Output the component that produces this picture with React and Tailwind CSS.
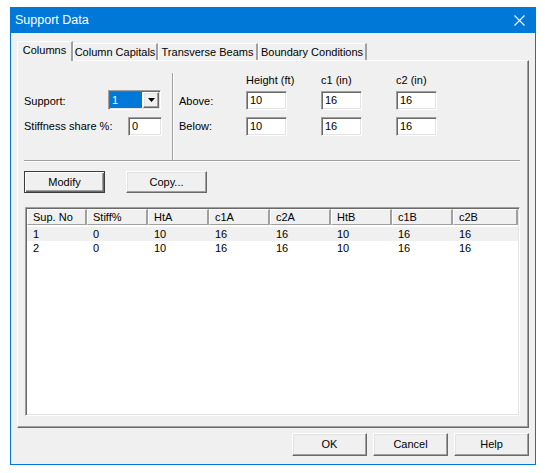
import React from "react";

const sunken =
  "bg-white border border-t-[#a0a0a0] border-l-[#a0a0a0] border-r-white border-b-white shadow-[inset_1px_1px_0_#696969,inset_-1px_-1px_0_#e3e3e3]";
const raised =
  "bg-[#f0f0f0] border border-t-white border-l-white border-r-[#696969] border-b-[#696969] shadow-[inset_-1px_-1px_0_#a0a0a0,inset_1px_1px_0_#e3e3e3]";

function Input({ value, w = "w-[41px]", h = "h-[19px]" }) {
  return (
    <div className={`${sunken} ${w} ${h} flex items-center pl-[3px] leading-none`}>
      {value}
    </div>
  );
}

function Btn({ children, w = "w-[75px]", h = "h-[23px]", def = false }) {
  return def ? (
    <div className={`${w} ${h} border border-[#3c3c3c] bg-[#f0f0f0] shadow-[inset_1px_1px_0_#fff,inset_-1px_-1px_0_#696969,inset_-2px_-2px_0_#a0a0a0] flex items-center justify-center`}>
      {children}
    </div>
  ) : (
    <div className={`${w} ${h} ${raised} flex items-center justify-center`}>{children}</div>
  );
}

const headers = ["Sup. No", "Stiff%", "HtA", "c1A", "c2A", "HtB", "c1B", "c2B"];
const widths = ["w-[60px]", "w-[61px]", "w-[61px]", "w-[61px]", "w-[61px]", "w-[61px]", "w-[61px]", "w-[65px]"];
const rows = [
  ["1", "0", "10", "16", "16", "10", "16", "16"],
  ["2", "0", "10", "16", "16", "10", "16", "16"],
];

export default function App() {
  return (
    <div className="w-[545px] h-[473px] bg-white pt-[7px] pl-[10px] font-['Liberation_Sans',Arial,sans-serif] text-[11px] text-black">
      <div className="w-[526px] h-[458px] border border-[#0078d7] bg-[#f0f0f0] flex flex-col">
        {/* Title bar */}
        <div className="h-[25px] bg-[#0078d7] flex items-center justify-between pl-[4px] pr-[10px] shrink-0">
          <span className="text-white text-[12.5px]">Support Data</span>
          <svg width="11" height="11" viewBox="0 0 11 11">
            <path d="M0.5 0.5 L10.5 10.5 M10.5 0.5 L0.5 10.5" stroke="white" strokeWidth="1.1" />
          </svg>
        </div>

        {/* Tabs */}
        <div className="ml-[6px] mt-[8px] flex items-end h-[19px] relative z-10">
          <div className="w-[56px] h-[20px] -mb-px bg-[#f0f0f0] border-t border-l border-t-white border-l-white border-r-2 border-r-[#a0a0a0] flex items-center justify-center pb-[2px]">
            Columns
          </div>
          <div className="w-[85px] h-[17px] border-t border-l border-t-white border-l-white border-r-2 border-r-[#a0a0a0] flex items-center justify-center">
            Column Capitals
          </div>
          <div className="w-[100px] h-[17px] border-t border-l border-t-white border-l-white border-r-2 border-r-[#a0a0a0] flex items-center justify-center">
            Transverse Beams
          </div>
          <div className="w-[109px] h-[17px] border-t border-l border-t-white border-l-white border-r-2 border-r-[#a0a0a0] flex items-center justify-center">
            Boundary Conditions
          </div>
        </div>

        {/* Panel */}
        <div className="ml-[6px] w-[512px] h-[368px] border border-t-white border-l-white border-r-[#696969] border-b-[#696969] shadow-[inset_-1px_-1px_0_#a0a0a0] pl-[6px] flex flex-col">
          {/* Top section */}
          <div className="flex h-[99px]">
            <div className="w-[148px] pt-[29px] flex flex-col">
              <div className="flex items-center h-[20px]">
                <span className="w-[84px] pt-[2px]">Support:</span>
                <div className={`${sunken} w-[53px] h-[20px] flex items-stretch p-px`}>
                  <div className="flex-1 bg-[#0078d7] text-white pl-[2px] flex items-center leading-none">1</div>
                  <div className={`w-[16px] ml-px ${raised} flex items-center justify-center`}>
                    <svg width="7" height="4" viewBox="0 0 7 4">
                      <path d="M0 0 H7 L3.5 4 Z" fill="black" />
                    </svg>
                  </div>
                </div>
              </div>
              <div className="flex items-center h-[19px] mt-[7px]">
                <span className="w-[104px]">Stiffness share %:</span>
                <Input value="0" w="w-[34px]" />
              </div>
            </div>
            <div className="mt-[12px] w-[2px] border-l border-l-[#a0a0a0] border-r border-r-white" />
            <div className="pl-[5px] pt-[13px] flex flex-col">
              <div className="flex h-[13px] items-center">
                <span className="w-[67px]" />
                <span className="w-[75px]">Height (ft)</span>
                <span className="w-[75px]">c1 (in)</span>
                <span>c2 (in)</span>
              </div>
              <div className="flex items-center mt-[4px]">
                <span className="w-[67px] pt-[2px]">Above:</span>
                <Input value="10" />
                <span className="w-[34px]" />
                <Input value="16" />
                <span className="w-[34px]" />
                <Input value="16" />
              </div>
              <div className="flex items-center mt-[7px]">
                <span className="w-[67px]">Below:</span>
                <Input value="10" />
                <span className="w-[34px]" />
                <Input value="16" />
                <span className="w-[34px]" />
                <Input value="16" />
              </div>
            </div>
          </div>
          <div className="w-[496px] h-[2px] border-t border-t-[#a0a0a0] border-b border-b-white" />

          {/* Buttons */}
          <div className="flex mt-[9px] gap-[21px]">
            <Btn w="w-[81px]" h="h-[22px]" def>Modify</Btn>
            <Btn w="w-[81px]" h="h-[22px]">Copy...</Btn>
          </div>

          {/* List */}
          <div className={`${sunken} ml-px mt-[14px] w-[495px] h-[209px] p-px flex flex-col`}>
            <div className="flex h-[16px] bg-[#f0f0f0]">
              {headers.map((h, i) => (
                <div
                  key={h}
                  className={`${widths[i]} h-[16px] border-t border-l border-t-white border-l-white border-r-2 border-r-[#a0a0a0] border-b border-b-[#a0a0a0] pl-[5px] flex items-center`}
                >
                  {h}
                </div>
              ))}
            </div>
            <div className="pt-[2px] bg-white flex flex-col">
              {rows.map((r, ri) => (
                <div key={ri} className={`flex h-[14px] items-center ${ri === 0 ? "bg-[#f0f0f0]" : "bg-white"}`}>
                  {r.map((c, ci) => (
                    <div key={ci} className={`${widths[ci]} pl-[6px]`}>
                      {c}
                    </div>
                  ))}
                </div>
              ))}
            </div>
          </div>
        </div>

        {/* Dialog buttons */}
        <div className="flex justify-end gap-[6px] mt-[5px] pr-[6px]">
          <Btn>OK</Btn>
          <Btn>Cancel</Btn>
          <Btn>Help</Btn>
        </div>
      </div>
    </div>
  );
}
